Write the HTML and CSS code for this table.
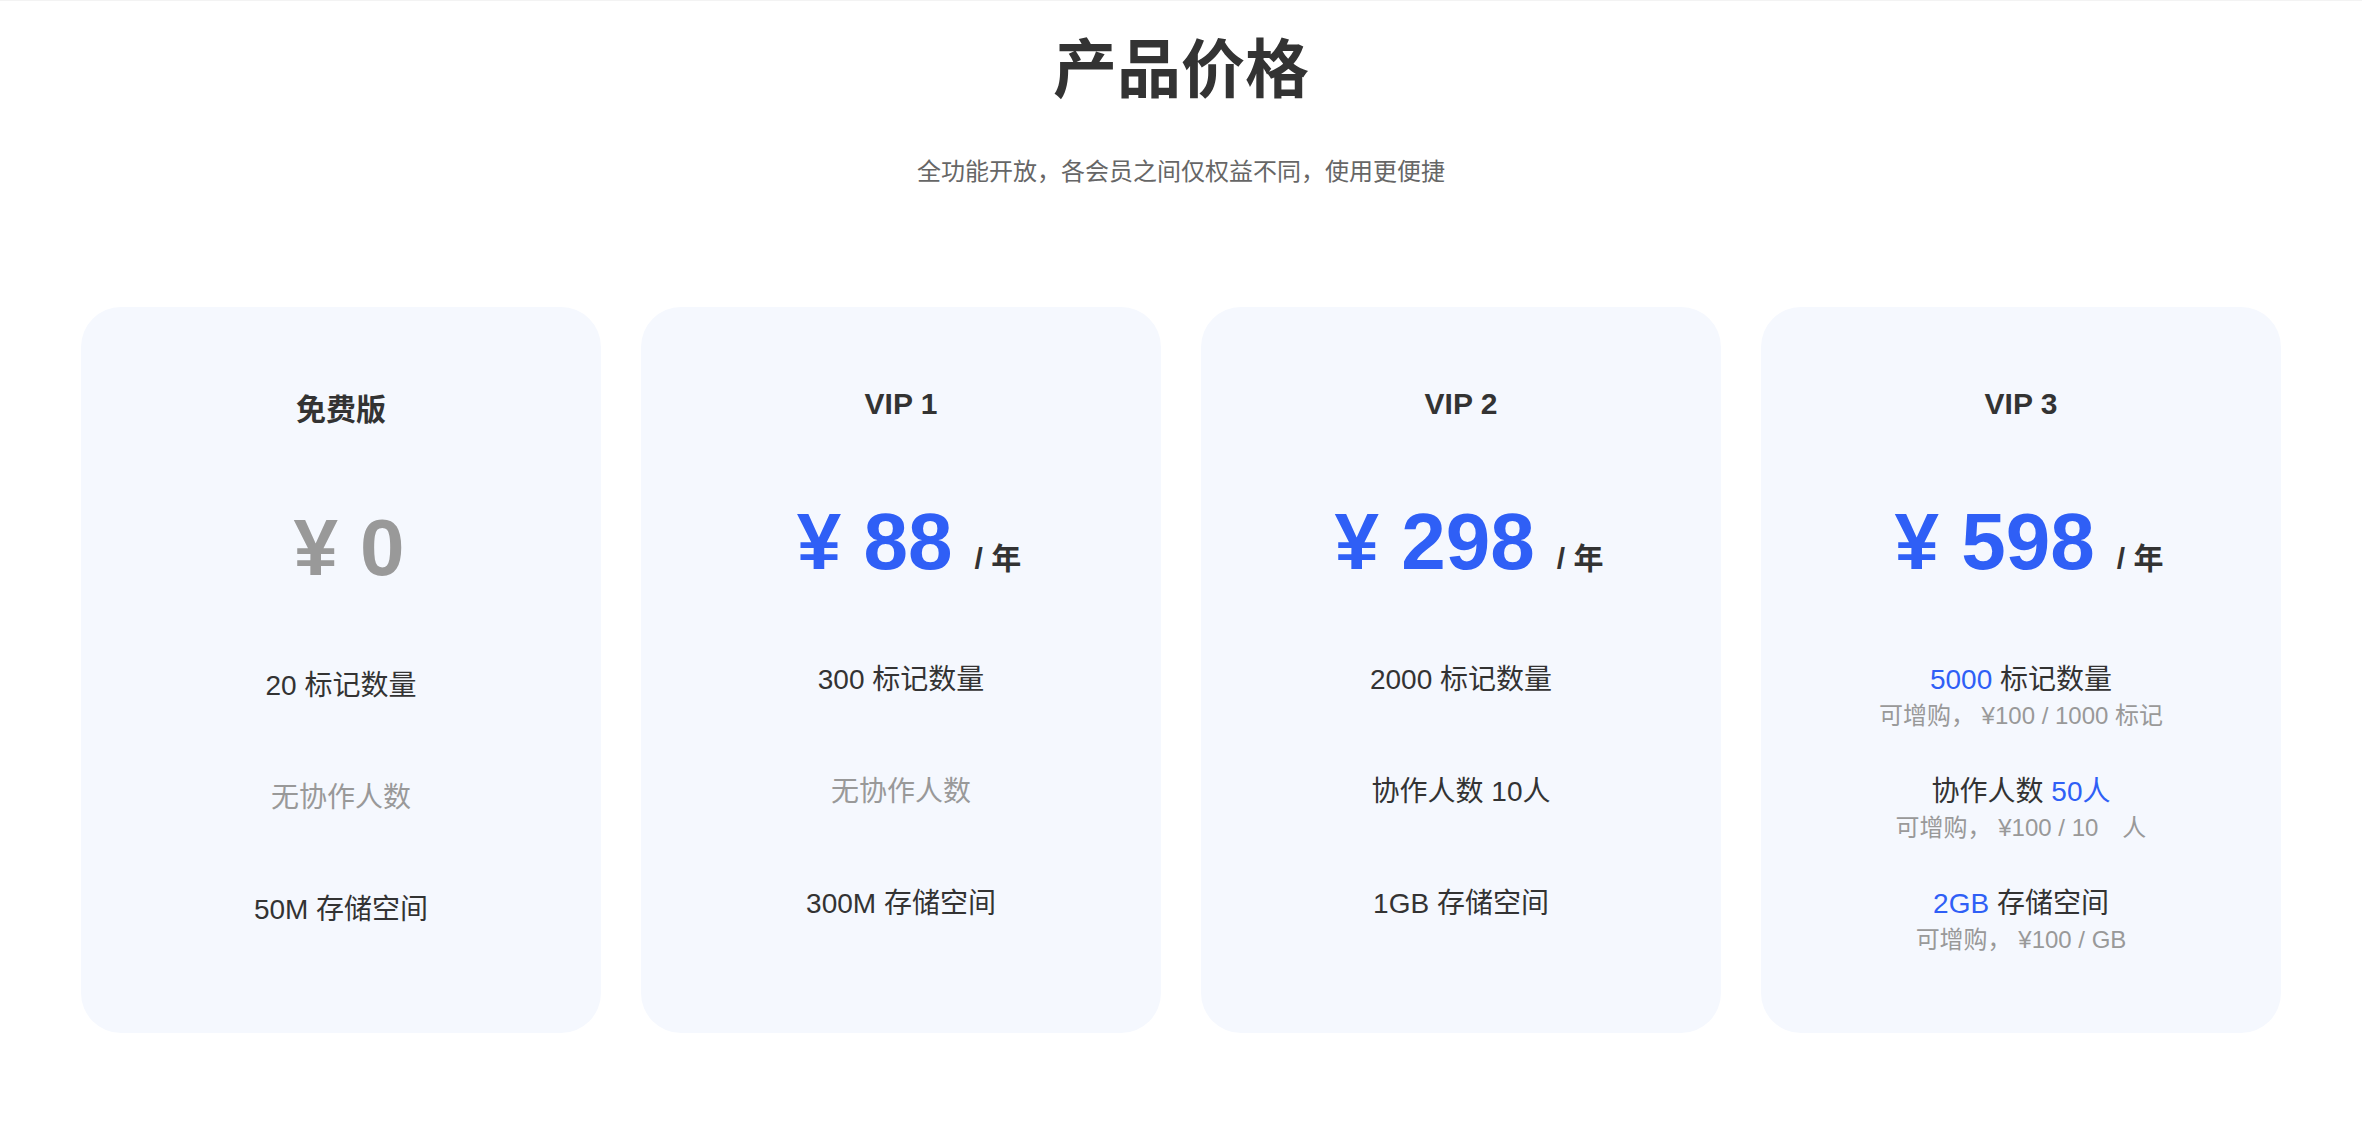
FILE: index.html
```html
<!DOCTYPE html>
<html lang="zh-CN">
<head>
    <meta charset="UTF-8">
    <meta name="viewport" content="width=device-width, initial-scale=1.0">
    <title>产品价格</title>
    <link rel="stylesheet" href="styles.css">
</head>
<body>

    <section class="pricing">
        <h1>产品价格</h1>
        <p class="subtitle">全功能开放，各会员之间仅权益不同，使用更便捷</p>

        <div class="plans">
            <div class="card card-free">
                <h3 class="plan-name">免费版</h3>
                <div class="price price-free">¥ 0</div>
                <div class="features">
                    <div class="feature"><p class="main">20 标记数量</p></div>
                    <div class="feature"><p class="main muted">无协作人数</p></div>
                    <div class="feature"><p class="main">50M 存储空间</p></div>
                </div>
            </div>

            <div class="card">
                <h3 class="plan-name">VIP 1</h3>
                <div class="price">¥ 88<span class="unit">/ 年</span></div>
                <div class="features">
                    <div class="feature"><p class="main">300 标记数量</p></div>
                    <div class="feature"><p class="main muted">无协作人数</p></div>
                    <div class="feature"><p class="main">300M 存储空间</p></div>
                </div>
            </div>

            <div class="card">
                <h3 class="plan-name">VIP 2</h3>
                <div class="price">¥ 298<span class="unit">/ 年</span></div>
                <div class="features">
                    <div class="feature"><p class="main">2000 标记数量</p></div>
                    <div class="feature"><p class="main">协作人数 10人</p></div>
                    <div class="feature"><p class="main">1GB 存储空间</p></div>
                </div>
            </div>

            <div class="card">
                <h3 class="plan-name">VIP 3</h3>
                <div class="price">¥ 598<span class="unit">/ 年</span></div>
                <div class="features">
                    <div class="feature">
                        <p class="main"><span class="hl">5000</span> 标记数量</p>
                        <p class="extra">可增购， ¥100 / 1000 标记</p>
                    </div>
                    <div class="feature">
                        <p class="main">协作人数 <span class="hl">50人</span></p>
                        <p class="extra">可增购， ¥100 / 10　人</p>
                    </div>
                    <div class="feature">
                        <p class="main"><span class="hl">2GB</span> 存储空间</p>
                        <p class="extra">可增购， ¥100 / GB</p>
                    </div>
                </div>
            </div>
        </div>
    </section>

</body>
</html>
```

FILE: styles.css
```css
/* General Styling */
* {
    box-sizing: border-box;
    margin: 0;
    padding: 0;
}

body {
    font-family: "Liberation Sans", "Noto Sans CJK SC", sans-serif;
    color: #333;
    background: #fff;
    border-top: 1px solid #f3f3f3;
}

.pricing {
    width: 2200px;
    margin: 0 auto;
}

h1 {
    margin-top: 29px;
    font-size: 64px;
    line-height: 80px;
    font-weight: 700;
    text-align: center;
}

.subtitle {
    margin-top: 46px;
    font-size: 24px;
    line-height: 32px;
    color: #666;
    text-align: center;
}

/* Plan Cards */
.plans {
    margin-top: 119px;
    display: grid;
    grid-template-columns: repeat(4, 1fr);
    gap: 40px;
}

.card {
    background: #f5f8fe;
    border-radius: 40px;
    padding: 79px 0 31px;
    text-align: center;
}

.card-free {
    padding-top: 85px;
}

.plan-name {
    font-size: 30px;
    line-height: 36px;
    font-weight: 700;
}

/* Price */
.price {
    margin-top: 80px;
    height: 80px;
    padding-left: 16px;
    font-size: 80px;
    line-height: 80px;
    font-weight: 700;
    color: #2f5ff6;
    white-space: nowrap;
}

.price-free {
    color: #999;
}

.unit {
    margin-left: 22px;
    font-size: 30px;
    line-height: 1;
    color: #333;
}

/* Features */
.features {
    margin-top: 78px;
    display: grid;
    grid-auto-rows: 112px;
}

.main {
    font-size: 28px;
    line-height: 40px;
}

.extra {
    font-size: 24px;
    line-height: 32px;
    color: #999;
}

.muted {
    color: #999;
}

.hl {
    color: #2f5ff6;
}
```
